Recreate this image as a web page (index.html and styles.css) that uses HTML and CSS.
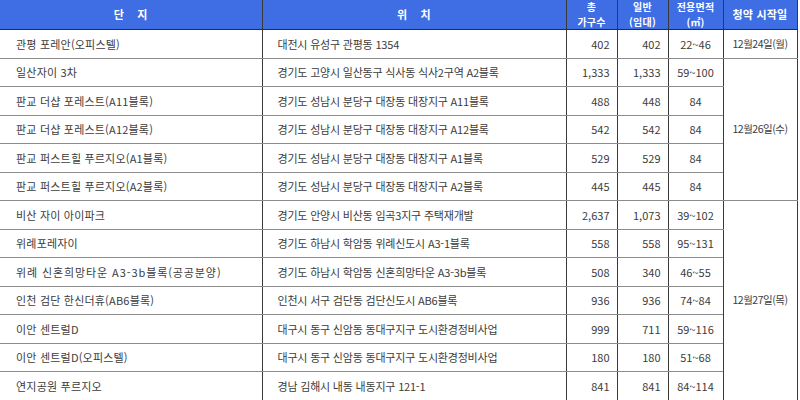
FILE: index.html
```html
<!DOCTYPE html>
<html lang="ko">
<head>
<meta charset="utf-8">
<link rel="stylesheet" href="styles.css">
</head>
<body>
<table class="sched">
  <colgroup>
    <col class="c-name"><col class="c-loc"><col class="c-num"><col class="c-num"><col class="c-area"><col class="c-date">
  </colgroup>
  <thead>
    <tr>
      <th>단&nbsp;&nbsp;&nbsp;&nbsp;지</th>
      <th>위&nbsp;&nbsp;&nbsp;&nbsp;치</th>
      <th class="two"><span class="l">총</span><span class="l">가구수</span></th>
      <th class="two"><span class="l">일반</span><span class="l">(임대)</span></th>
      <th class="two"><span class="l">전용면적</span><span class="l">(㎡)</span></th>
      <th>청약 시작일</th>
    </tr>
  </thead>
  <tbody>
    <tr><td class="name">관평 포레안(오피스텔)</td><td class="loc">대전시 유성구 관평동 1354</td><td class="num">402</td><td class="num">402</td><td class="area">22~46</td><td class="date">12월24일(월)</td></tr>
    <tr><td class="name">일산자이 3차</td><td class="loc">경기도 고양시 일산동구 식사동 식사2구역 A2블록</td><td class="num">1,333</td><td class="num">1,333</td><td class="area">59~100</td><td class="date" rowspan="5">12월26일(수)</td></tr>
    <tr><td class="name">판교 더샵 포레스트(A11블록)</td><td class="loc">경기도 성남시 분당구 대장동 대장지구 A11블록</td><td class="num">488</td><td class="num">448</td><td class="area">84</td></tr>
    <tr><td class="name">판교 더샵 포레스트(A12블록)</td><td class="loc">경기도 성남시 분당구 대장동 대장지구 A12블록</td><td class="num">542</td><td class="num">542</td><td class="area">84</td></tr>
    <tr><td class="name">판교 퍼스트힐 푸르지오(A1블록)</td><td class="loc">경기도 성남시 분당구 대장동 대장지구 A1블록</td><td class="num">529</td><td class="num">529</td><td class="area">84</td></tr>
    <tr><td class="name">판교 퍼스트힐 푸르지오(A2블록)</td><td class="loc">경기도 성남시 분당구 대장동 대장지구 A2블록</td><td class="num">445</td><td class="num">445</td><td class="area">84</td></tr>
    <tr><td class="name">비산 자이 아이파크</td><td class="loc">경기도 안양시 비산동 임곡3지구 주택재개발</td><td class="num">2,637</td><td class="num">1,073</td><td class="area">39~102</td><td class="date" rowspan="7">12월27일(목)</td></tr>
    <tr><td class="name">위례포레자이</td><td class="loc">경기도 하남시 학암동 위례신도시 A3-1블록</td><td class="num">558</td><td class="num">558</td><td class="area">95~131</td></tr>
    <tr><td class="name wide">위례 신혼희망타운 A3-3b블록(공공분양)</td><td class="loc">경기도 하남시 학암동 신혼희망타운 A3-3b블록</td><td class="num">508</td><td class="num">340</td><td class="area">46~55</td></tr>
    <tr><td class="name">인천 검단 한신더휴(AB6블록)</td><td class="loc">인천시 서구 검단동 검단신도시 AB6블록</td><td class="num">936</td><td class="num">936</td><td class="area">74~84</td></tr>
    <tr><td class="name">이안 센트럴D</td><td class="loc">대구시 동구 신암동 동대구지구 도시환경정비사업</td><td class="num">999</td><td class="num">711</td><td class="area">59~116</td></tr>
    <tr><td class="name">이안 센트럴D(오피스텔)</td><td class="loc">대구시 동구 신암동 동대구지구 도시환경정비사업</td><td class="num">180</td><td class="num">180</td><td class="area">51~68</td></tr>
    <tr class="last"><td class="name">연지공원 푸르지오</td><td class="loc">경남 김해시 내동 내동지구 121-1</td><td class="num">841</td><td class="num">841</td><td class="area">84~114</td></tr>
  </tbody>
</table>
</body>
</html>
```
FILE: styles.css
```css
html, body {
  margin: 0;
  padding: 0;
  background: #ffffff;
}

body {
  font-family: "Noto Sans CJK KR", "Noto Sans", sans-serif;
  color: #3c3c3c;
}

.sched {
  border-collapse: collapse;
  table-layout: fixed;
  width: 797px;
  font-size: 11px;
  letter-spacing: 0.2px;
}

.c-name { width: 262px; }
.c-loc { width: 304px; }
.c-num { width: 51px; }
.c-area { width: 55px; }
.c-date { width: 74px; }

.sched th {
  background: #3e6de4;
  color: #ffffff;
  font-weight: bold;
  font-size: 11px;
  line-height: 15px;
  height: 28px;
  padding: 0;
  text-align: center;
  vertical-align: middle;
  border-left: 1px solid #3a3a3a;
  border-right: 1px solid #3a3a3a;
  border-bottom: 1px solid #2c2c2c;
  border-top: 0;
}

.sched th.two {
  font-size: 10px;
}

.sched th .l {
  display: block;
  line-height: 14.5px;
}

.sched th:first-child { border-left: 0; }

.sched td {
  height: 27.5px;
  padding: 0;
  vertical-align: middle;
  border-left: 1px solid #3a3a3a;
  border-right: 1px solid #3a3a3a;
  border-bottom: 1px solid #8c8c8c;
  white-space: nowrap;
  line-height: 14px;
}

.sched td:first-child { border-left: 0; }

.sched td.name { padding-left: 16px; }
.sched td.name.wide { letter-spacing: 0.9px; }
.sched td.loc { padding-left: 15px; letter-spacing: -0.2px; }
.sched td.num { text-align: right; padding-right: 7px; letter-spacing: 0; }
.sched td.area { text-align: center; letter-spacing: 0; }
.sched td.date { text-align: center; font-size: 10.5px; letter-spacing: -0.5px; }

.sched tr.last td { border-bottom: 1px solid #666666; }
```
